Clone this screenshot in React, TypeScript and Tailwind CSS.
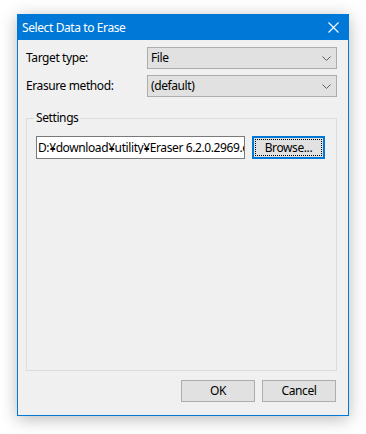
const font = { fontFamily: '"Noto Sans", "Liberation Sans", sans-serif' };

function Chevron() {
  return (
    <svg width="9" height="5" viewBox="0 0 9 5" className="shrink-0">
      <path d="M0.5 0.5 L4.5 4.5 L8.5 0.5" fill="none" stroke="#606060" strokeWidth="1" />
    </svg>
  );
}

function Combo({ value }: { value: string }) {
  return (
    <div className="flex h-[22px] w-[190px] items-center justify-between border border-[#adadad] bg-[#e1e1e1] pl-[3px] pr-[5px]">
      <span className="text-[12px] leading-none text-black">{value}</span>
      <Chevron />
    </div>
  );
}

function Button({ label, focused }: { label: string; focused?: boolean }) {
  if (focused) {
    return (
      <div className="flex h-[23px] w-[73px] items-center justify-center border-2 border-[#0078d7] bg-[#e1e1e1] p-[1px]">
        <div className="flex h-full w-full items-center justify-center border border-dotted border-black text-[12px] leading-none text-black">
          {label}
        </div>
      </div>
    );
  }
  return (
    <div className="flex h-[22px] w-[74px] items-center justify-center border border-[#adadad] bg-[#e1e1e1] text-[12px] leading-none text-black">
      {label}
    </div>
  );
}

export default function App() {
  return (
    <div className="h-[434px] w-[366px] bg-white pl-[17px] pt-[14px] tracking-[-0.4px]" style={font}>
      <div className="flex h-[402px] w-[332px] flex-col border border-[#0078d7] bg-[#f0f0f0] shadow-[0_3px_16px_rgba(0,0,0,0.28)]">
        {/* 标题栏 */}
        <div className="flex h-[25px] shrink-0 items-center justify-between bg-[#0078d7] pl-[4px] pr-[9px]">
          <span className="text-[12px] leading-none text-white">Select Data to Erase</span>
          <svg width="11" height="11" viewBox="0 0 11 11">
            <path d="M0.5 0.5 L10.5 10.5 M10.5 0.5 L0.5 10.5" stroke="white" strokeWidth="1.1" />
          </svg>
        </div>

        <div className="flex flex-1 flex-col pl-[8px] pr-[11px] pt-[7px]">
          <div className="flex items-center">
            <span className="w-[121px] text-[12px] leading-none text-black">Target type:</span>
            <Combo value="File" />
          </div>
          <div className="mt-[6px] flex items-center">
            <span className="w-[121px] text-[12px] leading-none text-black">Erasure method:</span>
            <Combo value="(default)" />
          </div>

          {/* 设置分组 */}
          <div className="relative mt-[21px] h-[253px] w-[311px] border border-[#dcdcdc]">
            <span className="absolute left-[7px] top-[-9px] bg-[#f0f0f0] px-[2px] text-[12px] leading-[16px] text-black">
              Settings
            </span>
            <div className="flex items-center pl-[9px] pt-[17px]">
              <div className="flex h-[23px] w-[209px] items-center overflow-hidden whitespace-nowrap border border-[#7a7a7a] bg-white pl-[1px] text-[12px] leading-none text-black">
                <span className="overflow-hidden">D:¥download¥utility¥Eraser 6.2.0.2969.exe</span>
              </div>
              <div className="ml-[7px]">
                <Button label="Browse..." focused />
              </div>
            </div>
          </div>

          <div className="mt-[9px] flex justify-end gap-[7px] pr-[1px]">
            <Button label="OK" />
            <Button label="Cancel" />
          </div>
        </div>
      </div>
    </div>
  );
}
